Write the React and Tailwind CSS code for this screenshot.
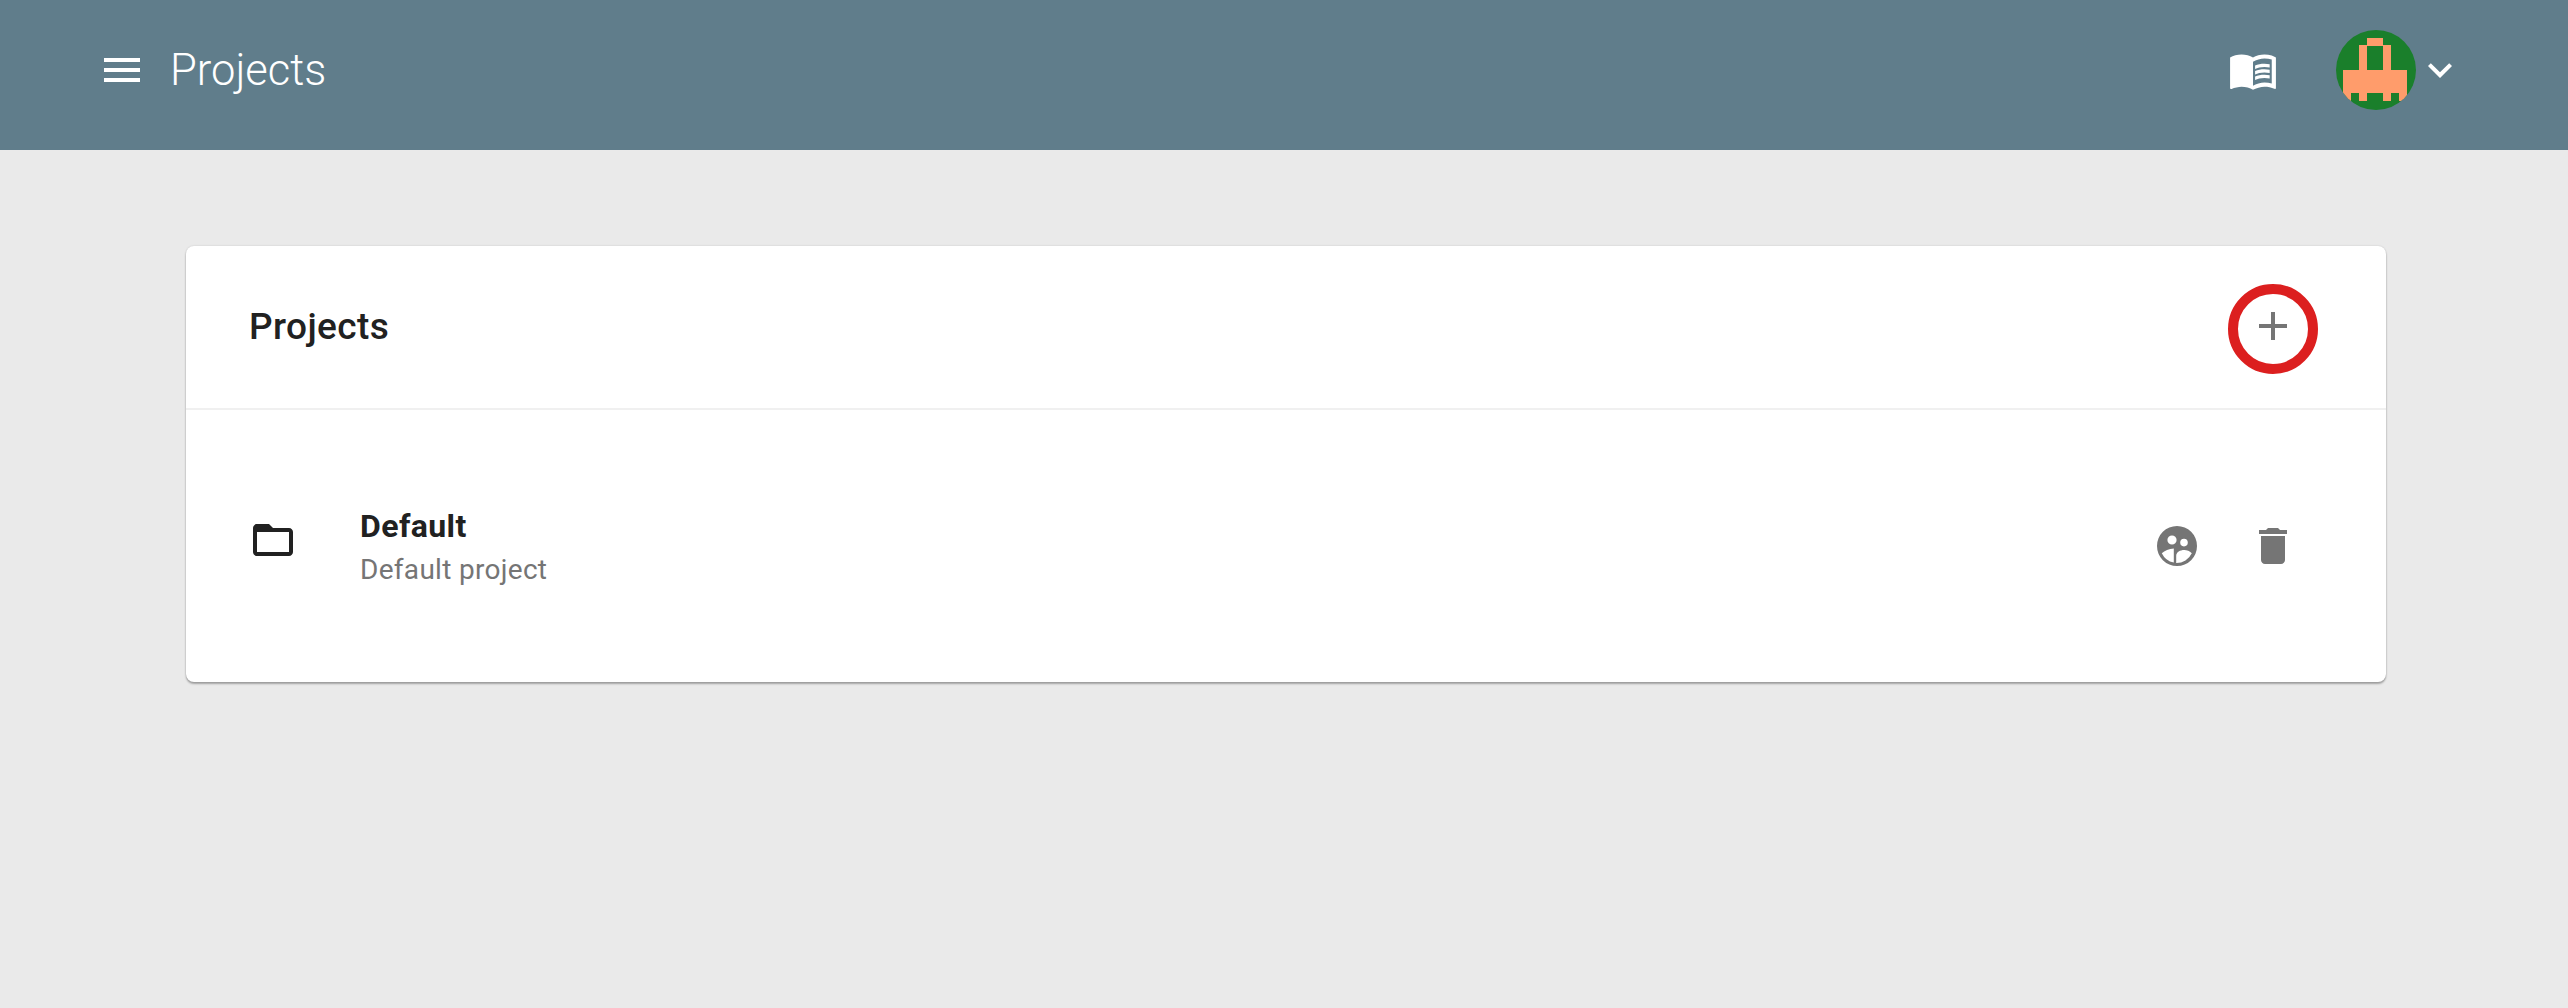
import React from "react";

function MenuIcon() {
  return (
    <svg width="48" height="48" viewBox="0 0 24 24" fill="#fff">
      <path d="M3 18h18v-2H3v2zm0-5h18v-2H3v2zm0-7v2h18V6H3z" />
    </svg>
  );
}

function ExpandIcon() {
  return (
    <svg width="48" height="48" viewBox="0 0 24 24" fill="#fff">
      <path d="M16.59 8.59L12 13.17 7.41 8.59 6 10l6 6 6-6z" />
    </svg>
  );
}

function BookIcon() {
  return (
    <svg width="50" height="50" viewBox="0 0 24 24" fill="#fff">
      <path d="M21 5c-1.11-.35-2.33-.5-3.5-.5-1.95 0-4.05.4-5.5 1.5-1.45-1.1-3.55-1.5-5.5-1.5S2.45 4.9 1 6v14.65c0 .25.25.5.5.5.1 0 .15-.05.25-.05C3.1 20.45 5.05 20 6.5 20c1.95 0 4.05.4 5.5 1.5 1.35-.85 3.8-1.5 5.5-1.5 1.65 0 3.35.3 4.75 1.05.1.05.15.05.25.05.25 0 .5-.25.5-.5V6c-.6-.45-1.25-.75-2-1zm0 13.5c-1.1-.35-2.3-.5-3.5-.5-1.7 0-4.15.65-5.5 1.5V8c1.35-.85 3.8-1.5 5.5-1.5 1.2 0 2.4.15 3.5.5v11.5z" />
      <path d="M17.5 10.5c.88 0 1.73.09 2.5.26V9.24c-.79-.15-1.64-.24-2.5-.24-1.7 0-3.24.29-4.5.83v1.66c1.13-.64 2.7-.99 4.5-.99zM13 12.49v1.66c1.13-.64 2.7-.99 4.5-.99.88 0 1.73.09 2.5.26V11.9c-.79-.15-1.64-.24-2.5-.24-1.7 0-3.24.3-4.5.83zM17.5 14.33c-1.7 0-3.24.29-4.5.83v1.66c1.13-.64 2.7-.99 4.5-.99.88 0 1.73.09 2.5.26v-1.52c-.79-.16-1.64-.24-2.5-.24z" />
    </svg>
  );
}

// pixel avatar on an 8px grid
function Avatar() {
  return (
    <svg width="80" height="80" viewBox="0 0 80 80" className="rounded-full" shapeRendering="crispEdges">
      <rect width="80" height="80" fill="#1a7f2b" />
      <g fill="#ff9c6b">
        <rect x="31" y="8" width="16" height="8" />
        <rect x="23" y="15" width="8" height="25" />
        <rect x="47" y="15" width="8" height="25" />
        <rect x="7" y="40" width="64" height="23" />
        <rect x="7" y="63" width="8" height="8" />
        <rect x="23" y="63" width="8" height="8" />
        <rect x="47" y="63" width="8" height="8" />
        <rect x="63" y="63" width="8" height="8" />
      </g>
    </svg>
  );
}

function FolderIcon() {
  return (
    <svg width="48" height="48" viewBox="0 0 24 24" fill="#212121">
      <path d="M20 6h-8l-2-2H4c-1.1 0-1.99.9-1.99 2L2 18c0 1.1.9 2 2 2h16c1.1 0 2-.9 2-2V8c0-1.1-.9-2-2-2zm0 12H4V8h16v10z" />
    </svg>
  );
}

function PeopleIcon() {
  return (
    <svg width="48" height="48" viewBox="0 0 24 24" fill="#757575">
      <path
        fillRule="evenodd"
        d="M12 2a10 10 0 1 0 0 20 10 10 0 0 0 0-20zM9.5 6.7a2.3 2.3 0 1 1 0 4.6 2.3 2.3 0 0 1 0-4.6zm6 1.7a1.9 1.9 0 1 1 0 3.8 1.9 1.9 0 0 1 0-3.8zM4.4 15.6c1.4-1.4 3.6-2.3 6-2.4v7.1a8.5 8.5 0 0 1-6-4.7zm7.2 4.9V17c0-2 2-3 4-3 1.4 0 2.7.5 3.8 1.6a8.5 8.5 0 0 1-7.8 4.9z"
      />
    </svg>
  );
}

function TrashIcon() {
  return (
    <svg width="48" height="48" viewBox="0 0 24 24" fill="#757575">
      <path d="M6 19c0 1.1.9 2 2 2h8c1.1 0 2-.9 2-2V7H6v12zM19 4h-3.5l-1-1h-5l-1 1H5v2h14V4z" />
    </svg>
  );
}

export default function App() {
  return (
    <div className="min-h-[1008px] bg-[#eaeaea] font-['Roboto',sans-serif]">
      <header className="h-[150px] bg-[#607d8b] flex items-center pl-[98px] pr-[104px] pb-[10px]">
        <MenuIcon />
        <h1 className="ml-[24px] mt-[2px] text-[43.5px] font-light text-white">Projects</h1>
        <div className="ml-auto flex items-center">
          <BookIcon />
          <div className="ml-[58px]">
            <Avatar />
          </div>
          <ExpandIcon />
        </div>
      </header>
      <main className="pl-[186px] pr-[182px] pt-[96px]">
        <div className="bg-white rounded-[8px] shadow-[0_2px_2px_rgba(0,0,0,0.3),0_0_2px_rgba(0,0,0,0.15)]">
          <div className="h-[164px] pl-[63px] pr-[68px] flex items-center justify-between border-b-2 border-[#f0f0f0]">
            <h2 className="text-[37px] tracking-[0.4px] font-medium text-[#212121]">Projects</h2>
            <button className="w-[90px] h-[90px] mt-[3px] rounded-full border-[10px] border-[#dc1f1f] flex items-center justify-center">
              <svg width="48" height="48" viewBox="0 0 24 24" fill="#757575" className="-mt-[5px]">
                <path d="M19 13h-6v6h-2v-6H5v-2h6V5h2v6h6v2z" />
              </svg>
            </button>
          </div>
          <div className="h-[272px] pl-[63px] pr-[89px] flex items-center">
            <div className="-mt-[12px]">
              <FolderIcon />
            </div>
            <div className="ml-[63px] mt-[3px]">
              <div className="text-[32px] tracking-[0.4px] font-bold text-[#212121] leading-[44px]">Default</div>
              <div className="text-[28px] tracking-[0.3px] text-[#757575] leading-[44px]">Default project</div>
            </div>
            <div className="ml-auto flex items-center gap-[48px]">
              <PeopleIcon />
              <TrashIcon />
            </div>
          </div>
        </div>
      </main>
    </div>
  );
}
